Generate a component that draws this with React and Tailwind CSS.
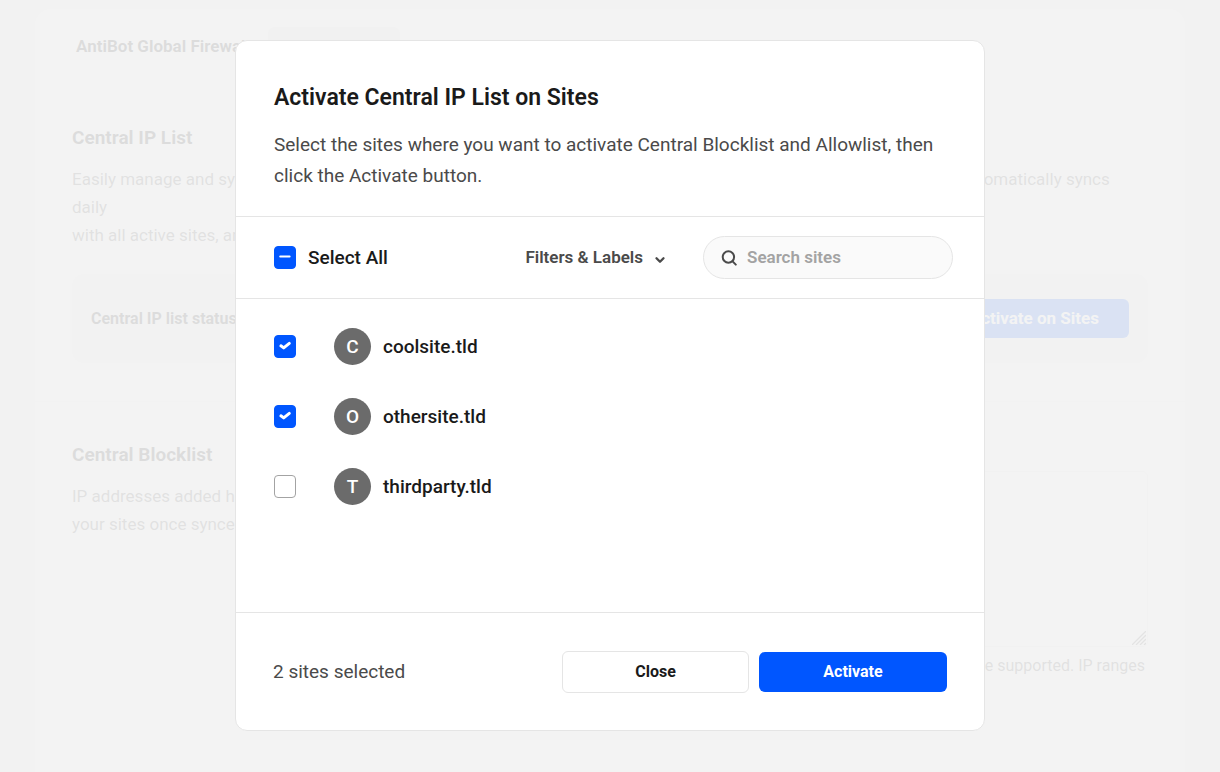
import { useState } from 'react'
import { ChevronDown } from 'lucide-react'

const sites = [
  { id: 1, name: 'coolsite.tld' },
  { id: 2, name: 'othersite.tld' },
  { id: 3, name: 'thirdparty.tld' },
]

function Checkbox({ id, checked, indeterminate = false, onChange }) {
  return (
    <span className="grid h-[23px] w-[22px] shrink-0">
      <input
        id={id}
        type="checkbox"
        checked={checked}
        ref={(el) => {
          if (el) el.indeterminate = indeterminate
        }}
        onChange={onChange}
        className="col-start-1 row-start-1 h-[23px] w-[22px] appearance-none rounded-[4px] border border-[#a3a3a3] bg-white checked:border-[#0056ff] checked:bg-[#0056ff] indeterminate:border-[#0056ff] indeterminate:bg-[#0056ff]"
      />
      <svg
        viewBox="0 0 22 23"
        fill="none"
        stroke="white"
        strokeLinecap="round"
        strokeLinejoin="round"
        className="pointer-events-none col-start-1 row-start-1 h-[23px] w-[22px]"
      >
        {indeterminate && <path d="M6.2 10.6H15.6" strokeWidth="2" />}
        {checked && !indeterminate && <path d="M6.9 10.8L9.7 12.9L15.3 8.4" strokeWidth="3" />}
      </svg>
    </span>
  )
}

function SearchIcon() {
  return (
    <svg viewBox="0 0 16 16" fill="none" stroke="#4a4a4a" strokeWidth="2" strokeLinecap="round" className="h-4 w-4 shrink-0">
      <circle cx="7.4" cy="7" r="5.7" />
      <path d="M11.6 11.4L14.8 14.6" />
    </svg>
  )
}

function SettingsPage() {
  return (
    <main className="h-screen overflow-hidden bg-[#eeeeee] px-[35px] pt-[9px] text-[#1a1a1a]">
      <div className="rounded-2xl bg-white pt-[18px]">
        <div className="flex h-[38px] items-center px-[41px]">
          <label htmlFor="firewall" className="w-48 whitespace-nowrap text-[17px] leading-7 font-bold">
            AntiBot Global Firewall
          </label>
          <select id="firewall" className="h-[38px] w-[132px] rounded-md bg-[#e8e8e8] px-3 text-base">
            <option>Enabled</option>
          </select>
        </div>

        <section className="border-b border-[#eeeeee] px-[37px] pt-[59px] pb-[38px]">
          <h2 className="text-[19px] leading-7 font-bold">Central IP List</h2>
          <p className="mt-[13px] text-[17px] leading-7 text-[#4a4a4a]">
            Easily manage and sync your blocked and allowed IP addresses across all of your connected sites. The Central IP List automatically syncs daily
            <br />
            with all active sites, and you can sync it manually at any time.
          </p>
          <div className="mt-[25px] flex h-[89px] items-center justify-between rounded-xl bg-[#eeeeee] px-[19px]">
            <span className="text-base font-bold">Central IP list status</span>
            <button className="h-[39px] rounded-md bg-[#0056ff] px-[30px] text-[17px] font-bold text-white">
              Activate on Sites
            </button>
          </div>
        </section>

        <section className="flex justify-between border-b border-[#eeeeee] px-[37px] pt-[39px] pb-[111px]">
          <div className="w-[360px]">
            <h2 className="text-[19px] leading-7 font-bold">Central Blocklist</h2>
            <p className="mt-[13px] text-[17px] leading-7 text-[#4a4a4a]">
              IP addresses added here are blocked on all
              <br />
              your sites once synced.
            </p>
          </div>
          <div className="w-[640px] pt-[30px]">
            <div className="relative">
              <textarea
                aria-label="Central Blocklist"
                className="block h-[176px] w-full resize-none rounded-md border border-[#e5e5e5] bg-white"
              />
              <svg viewBox="0 0 14 14" stroke="#606060" fill="none" className="pointer-events-none absolute right-0.5 bottom-0.5 h-3.5 w-3.5">
                <path d="M0 14L14 0M4 14L14 4M8 14L14 8M12 14L14 12" strokeWidth="1.3" />
              </svg>
            </div>
            <p className="mt-[5px] pr-[3px] text-right text-base leading-7 text-[#4a4a4a]">
              Enter one IP per line. IPv4 and IPv6 are supported. IP ranges
            </p>
          </div>
        </section>
        <div className="h-20" />
      </div>
    </main>
  )
}

export default function App() {
  const [selected, setSelected] = useState([1, 2])
  const [search, setSearch] = useState('')

  const allSelected = selected.length === sites.length
  const visibleSites = sites.filter((site) => site.name.includes(search.toLowerCase()))

  const toggleSite = (id) => {
    setSelected((prev) => (prev.includes(id) ? prev.filter((s) => s !== id) : [...prev, id]))
  }

  const toggleAll = () => {
    setSelected(allSelected ? [] : sites.map((site) => site.id))
  }

  return (
    <div className="font-[Roboto,'Liberation_Sans',sans-serif]">
      <SettingsPage />

      {/* Overlay */}
      <div className="fixed inset-0 flex items-start justify-center overflow-hidden bg-[#f2f2f2]/90 pt-10">
        <div
          role="dialog"
          aria-modal="true"
          aria-labelledby="dialog-title"
          className="w-full max-w-[750px] rounded-xl border border-[#e5e5e5] bg-white text-[#1a1a1a]"
        >
          <header className="border-b border-[#e5e5e5] px-[38px] pt-[41px] pb-[25px]">
            <h1 id="dialog-title" className="text-[23px] leading-8 font-semibold">
              Activate Central IP List on Sites
            </h1>
            <p className="mt-[15px] text-[19px] leading-[31px] text-[#4a4a4a]">
              Select the sites where you want to activate Central Blocklist and Allowlist, then click the Activate
              button.
            </p>
          </header>

          <div className="flex h-[82px] items-center border-b border-[#e5e5e5] pr-[31px] pl-[38px]">
            <Checkbox id="select-all" checked={allSelected} indeterminate={selected.length > 0 && !allSelected} onChange={toggleAll} />
            <label htmlFor="select-all" className="pl-3 text-[19px] leading-[31px] font-medium">
              Select All
            </label>
            <button className="ml-auto flex items-center gap-2.5 text-[17px] leading-[27px] font-semibold text-[#4a4a4a]">
              Filters &amp; Labels
              <ChevronDown size={14} strokeWidth={4} className="mt-1" />
            </button>
            <div className="ml-9 flex h-[43px] w-[250px] items-center gap-2.5 rounded-full border border-[#e5e5e5] bg-[#fafafa] px-[17px]">
              <SearchIcon />
              <input
                type="text"
                aria-label="Search sites"
                placeholder="Search sites"
                value={search}
                onChange={(e) => setSearch(e.target.value)}
                className="min-w-0 flex-1 bg-transparent text-[17px] leading-[27px] font-semibold outline-none placeholder:text-[#a3a3a3]"
              />
            </div>
          </div>

          <ul className="min-h-[313px] px-[38px] pt-3">
            {visibleSites.map((site) => (
              <li key={site.id} className="flex h-[70px] items-center">
                <Checkbox id={`site-${site.id}`} checked={selected.includes(site.id)} onChange={() => toggleSite(site.id)} />
                <label htmlFor={`site-${site.id}`} className="ml-[38px] flex items-center gap-3 text-[19px] leading-[31px] font-medium">
                  <span className="flex h-[37px] w-[37px] items-center justify-center rounded-full bg-[#6b6b6b] text-[19px] text-white">
                    {site.name[0].toUpperCase()}
                  </span>
                  {site.name}
                </label>
              </li>
            ))}
          </ul>

          <footer className="flex h-[118px] items-center justify-between border-t border-[#e5e5e5] px-[37px]">
            <span className="text-[19px] leading-[31px] text-[#4a4a4a]">{selected.length} sites selected</span>
            <div className="flex items-center gap-2.5">
              <button className="h-[42px] w-[187px] rounded-md border border-[#e5e5e5] bg-white text-base font-bold">
                Close
              </button>
              <button className="h-10 w-[188px] rounded-md bg-[#0056ff] text-base font-bold text-white">Activate</button>
            </div>
          </footer>
        </div>
      </div>
    </div>
  )
}
